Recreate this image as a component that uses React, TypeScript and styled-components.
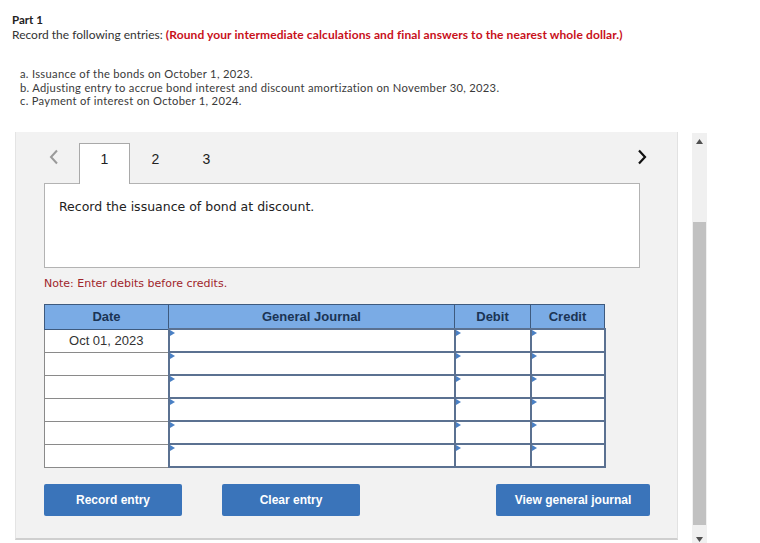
import React from "react";
import styled, { createGlobalStyle } from "styled-components";

const Global = createGlobalStyle`
  html, body { margin: 0; padding: 0; background: #ffffff; }
  body { width: 760px; height: 543px; overflow: hidden; }
  * { box-sizing: border-box; }
`;

const Page = styled.div`
  width: 760px;
  height: 543px;
  overflow: hidden;
  background: #fff;
`;

const Intro = styled.div`
  padding: 12px 12px 0 12px;
  font-family: Lato, "Open Sans", sans-serif;
  font-size: 12px;
  line-height: 15px;
  color: #333;
`;

const PartTitle = styled.div`
  font-weight: 700;
  font-size: 11.5px;
  color: #222;
`;

const Instruction = styled.div`
  color: #333;
`;

const Warn = styled.span`
  color: #c8101a;
  font-weight: 700;
  letter-spacing: 0.1px;
`;

const TaskList = styled.div`
  margin: 25px 0 0 8px;
  font-size: 11.2px;
  letter-spacing: 0.3px;
  line-height: 13.5px;
  color: #3a3a3a;
`;

const MainRow = styled.div`
  display: flex;
  align-items: flex-start;
  gap: 14px;
  margin: 24px 0 0 15px;
`;

const Panel = styled.div`
  width: 663px;
  background: #f2f2f2;
  border-left: 1px solid #e4e4e4;
  border-right: 1px solid #e2e2e2;
  border-bottom: 2px solid #cfcfcf;
  padding: 11px 27px 22px 28px;
`;

const TabRow = styled.div`
  display: flex;
  align-items: flex-end;
  height: 40px;
  position: relative;
  z-index: 1;
`;

const NavArrow = styled.div<{ $right?: boolean }>`
  width: 35px;
  height: 40px;
  display: flex;
  align-items: center;
  justify-content: ${(p) => (p.$right ? "flex-end" : "flex-start")};
  padding-left: ${(p) => (p.$right ? "0" : "5px")};
  padding-bottom: 12px;
  margin-left: ${(p) => (p.$right ? "auto" : "0")};
  margin-right: ${(p) => (p.$right ? "3px" : "0")};
`;

const Tab = styled.div<{ $active?: boolean }>`
  width: 51px;
  height: 41px;
  display: flex;
  align-items: flex-start;
  justify-content: center;
  padding-top: 7px;
  font-family: "Liberation Sans", Arial, sans-serif;
  font-size: 14px;
  color: #222;
  background: ${(p) => (p.$active ? "#fff" : "transparent")};
  border: 1px solid ${(p) => (p.$active ? "#a9a9a9" : "transparent")};
  border-bottom: none;
  margin-bottom: -1px;
`;

const ContentBox = styled.div`
  width: 596px;
  height: 85px;
  background: #fff;
  border: 1px solid #b3b3b3;
  padding: 15px 14px;
  font-family: "DejaVu Sans", Verdana, sans-serif;
  font-size: 12.5px;
  color: #222;
`;

const Note = styled.div`
  margin-top: 9px;
  font-family: "DejaVu Sans", Verdana, sans-serif;
  font-size: 11px;
  color: #a0252b;
`;

const Table = styled.table`
  margin-top: 14px;
  border-collapse: collapse;
  width: 560px;
  table-layout: fixed;
  font-family: "Liberation Sans", Arial, sans-serif;
`;

const HeadCell = styled.th<{ $w: number }>`
  width: ${(p) => p.$w}px;
  height: 25px;
  padding: 0;
  background: #7aabe5;
  border: 1px solid #3e5a7e;
  color: #1b3454;
  font-size: 13px;
  font-weight: 700;
  text-align: center;
`;

const DateCell = styled.td`
  height: 23px;
  padding: 0;
  background: #fff;
  border: 1px solid #8a8a8a;
  font-size: 13px;
  color: #333;
  text-align: center;
`;

const InputCell = styled.td`
  height: 23px;
  padding: 0;
  background: #fff;
  border: 2px solid #5b7191;
  position: relative;
`;

const Marker = styled.span`
  position: absolute;
  left: 0;
  top: 0;
  width: 0;
  height: 0;
  border-top: 3px solid transparent;
  border-bottom: 3px solid transparent;
  border-left: 5px solid #4a80c4;
`;

const ButtonRow = styled.div`
  display: flex;
  gap: 40px;
  margin-top: 16px;
  width: 606px;
`;

const ActionButton = styled.button<{ $w: number; $push?: boolean }>`
  width: ${(p) => p.$w}px;
  height: 32px;
  border: none;
  border-radius: 2px;
  background: #3a74ba;
  color: #fff;
  font-family: "Liberation Sans", Arial, sans-serif;
  font-size: 12px;
  font-weight: 700;
  margin-left: ${(p) => (p.$push ? "auto" : "0")};
  padding: 0;
  cursor: pointer;
`;

const Scrollbar = styled.div`
  width: 15px;
  height: 420px;
  margin-top: 1px;
  background: #f0f0f0;
  display: flex;
  flex-direction: column;
  align-items: center;
`;

const ScrollArrow = styled.div<{ $down?: boolean }>`
  height: ${(p) => (p.$down ? "17px" : "17px")};
  width: 15px;
  display: flex;
  align-items: ${(p) => (p.$down ? "flex-end" : "center")};
  justify-content: center;
`;

const ScrollGap = styled.div`
  height: 72px;
`;

const Thumb = styled.div`
  width: 13px;
  height: 303px;
  background: #c1c1c1;
`;

const rows = ["Oct 01, 2023", "", "", "", "", ""];

export default function App() {
  return (
    <Page>
      <Global />
      <Intro>
        <PartTitle>Part 1</PartTitle>
        <Instruction>
          Record the following entries:{" "}
          <Warn>
            (Round your intermediate calculations and final answers to the nearest whole dollar.)
          </Warn>
        </Instruction>
        <TaskList>
          <div>a. Issuance of the bonds on October 1, 2023.</div>
          <div>
            b. Adjusting entry to accrue bond interest and discount amortization on November 30, 2023.
          </div>
          <div>c. Payment of interest on October 1, 2024.</div>
        </TaskList>
      </Intro>
      <MainRow>
        <Panel>
          <TabRow>
            <NavArrow>
              <svg width="10" height="16" viewBox="0 0 10 16">
                <polyline points="8,1.5 2,8 8,14.5" fill="none" stroke="#9a9a9a" strokeWidth="2" />
              </svg>
            </NavArrow>
            <Tab $active>1</Tab>
            <Tab>2</Tab>
            <Tab>3</Tab>
            <NavArrow $right>
              <svg width="10" height="16" viewBox="0 0 10 16">
                <polyline points="2,1.5 8,8 2,14.5" fill="none" stroke="#111" strokeWidth="2.2" />
              </svg>
            </NavArrow>
          </TabRow>
          <ContentBox>Record the issuance of bond at discount.</ContentBox>
          <Note>Note: Enter debits before credits.</Note>
          <Table>
            <thead>
              <tr>
                <HeadCell $w={124}>Date</HeadCell>
                <HeadCell $w={286}>General Journal</HeadCell>
                <HeadCell $w={76}>Debit</HeadCell>
                <HeadCell $w={74}>Credit</HeadCell>
              </tr>
            </thead>
            <tbody>
              {rows.map((d, i) => (
                <tr key={i}>
                  <DateCell>{d}</DateCell>
                  <InputCell>
                    <Marker />
                  </InputCell>
                  <InputCell>
                    <Marker />
                  </InputCell>
                  <InputCell>
                    <Marker />
                  </InputCell>
                </tr>
              ))}
            </tbody>
          </Table>
          <ButtonRow>
            <ActionButton $w={138}>Record entry</ActionButton>
            <ActionButton $w={138}>Clear entry</ActionButton>
            <ActionButton $w={154} $push>
              View general journal
            </ActionButton>
          </ButtonRow>
        </Panel>
        <Scrollbar>
          <ScrollArrow>
            <svg width="7" height="5" viewBox="0 0 7 5">
              <polygon points="3.5,0 7,5 0,5" fill="#505050" />
            </svg>
          </ScrollArrow>
          <ScrollGap />
          <Thumb />
          <ScrollArrow $down>
            <svg width="7" height="5" viewBox="0 0 7 5">
              <polygon points="0,0 7,0 3.5,5" fill="#505050" />
            </svg>
          </ScrollArrow>
        </Scrollbar>
      </MainRow>
    </Page>
  );
}
